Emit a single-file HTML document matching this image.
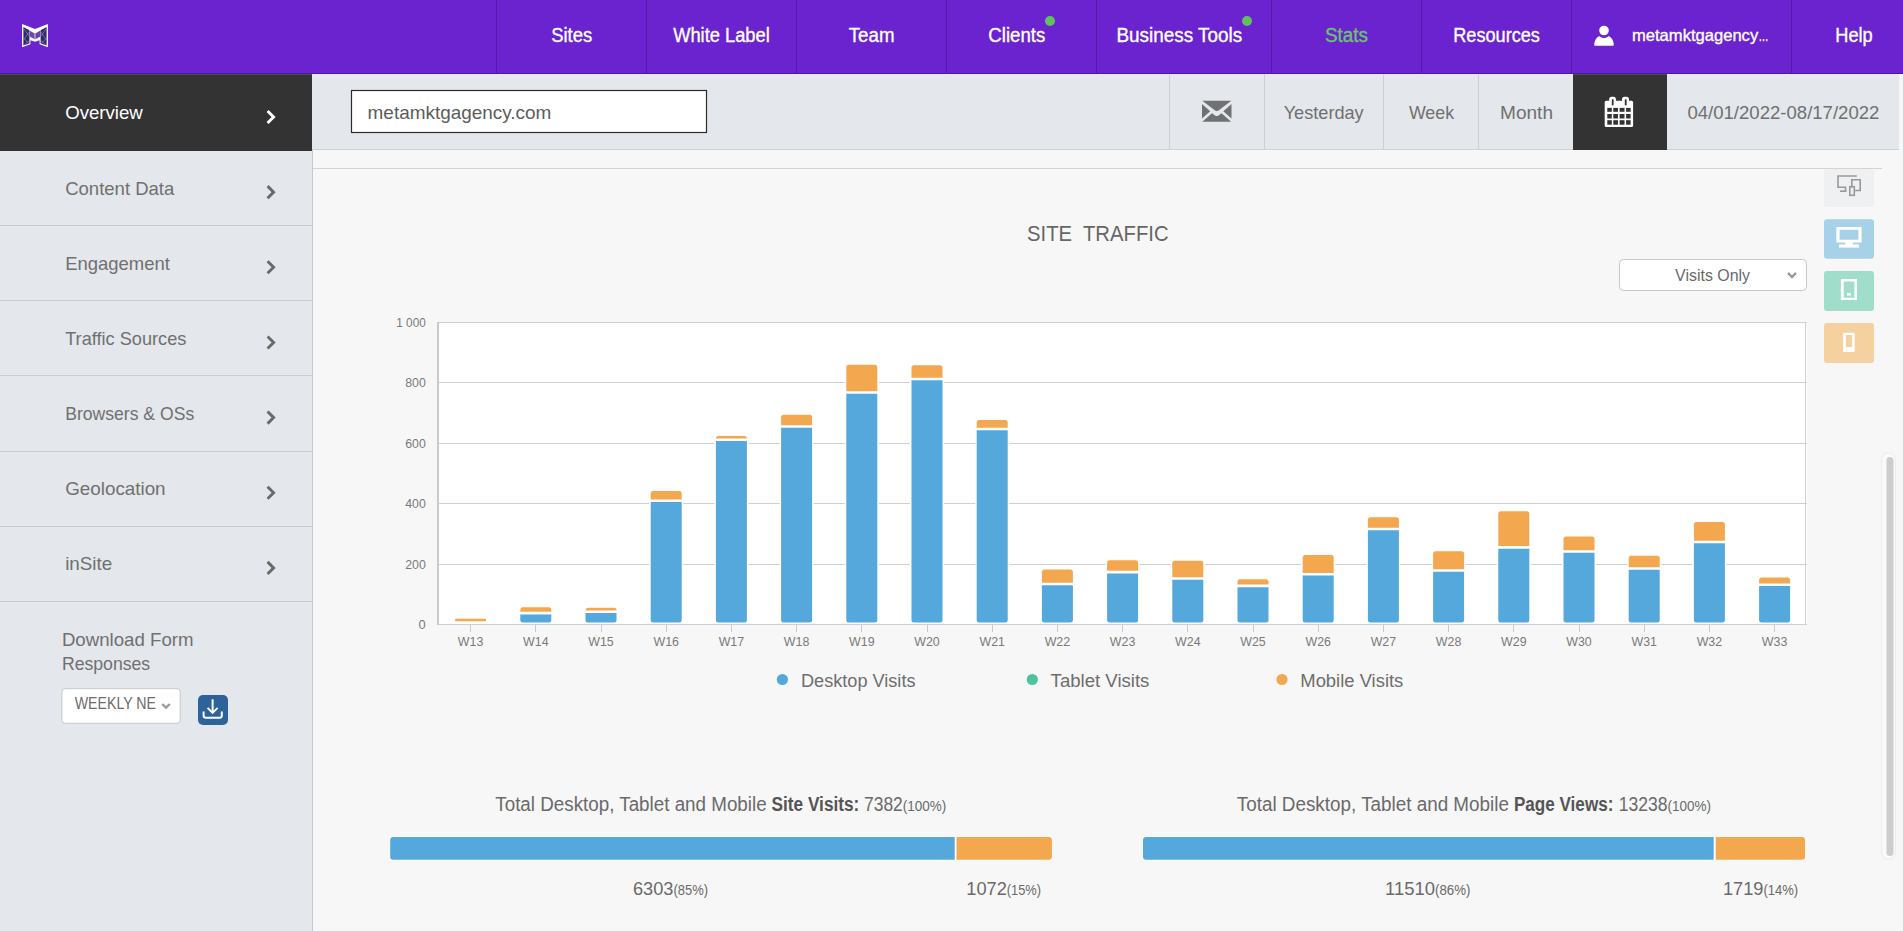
<!DOCTYPE html>
<html><head><meta charset="utf-8"><title>Stats</title>
<style>html,body{margin:0;padding:0;width:1903px;height:931px;overflow:hidden;background:#f7f7f7;font-family:"Liberation Sans", sans-serif;} svg{display:block}</style>
</head><body><svg width="1903" height="931" viewBox="0 0 1903 931" font-family='"Liberation Sans", sans-serif'><rect x="0" y="0" width="1903" height="931" fill="#f7f7f7"/><rect x="0" y="0" width="1903" height="73" fill="#6b22cf"/><rect x="0" y="73" width="1903" height="1" fill="#5314a8"/><rect x="496" y="0" width="1" height="73" fill="#5518ac"/><rect x="646" y="0" width="1" height="73" fill="#5518ac"/><rect x="796" y="0" width="1" height="73" fill="#5518ac"/><rect x="946" y="0" width="1" height="73" fill="#5518ac"/><rect x="1096" y="0" width="1" height="73" fill="#5518ac"/><rect x="1271" y="0" width="1" height="73" fill="#5518ac"/><rect x="1421" y="0" width="1" height="73" fill="#5518ac"/><rect x="1571" y="0" width="1" height="73" fill="#5518ac"/><rect x="1791" y="0" width="1" height="73" fill="#5518ac"/><g transform="translate(21,23)"><path d="M1.1,1.1 L14,5.9 L26.9,1.1 L26.9,24.3 L18.6,21.2 L18.6,17.3 L14.1,18.8 L9.4,17.3 L9.4,21.2 L1.1,24.3 Z" fill="#ffffff"/><path d="M2.4,4 L8.4,7.2 L8.4,20.4 L2.4,22.6 Z" fill="#2f2a6d"/><path d="M25.6,4 L19.6,7.2 L19.6,20.4 L25.6,22.6 Z" fill="#2f2a6d"/><path d="M8.6,7.6 L13.7,10.4 L13.7,16.2 L8.6,13.6 Z" fill="#7049ad"/><path d="M19.4,7.6 L14.3,10.4 L14.3,16.2 L19.4,13.6 Z" fill="#6844a5"/><rect x="13.6" y="10.4" width="0.8" height="5.8" fill="#b597d6"/><path d="M3,6 L8,13 M8,9 L3,16.5 M3,15.5 L8,21 M8,17.5 L3.5,22 M25,6 L20,13 M20,9 L25,16.5 M25,15.5 L20,21 M20,17.5 L24.5,22" stroke="#fff" stroke-width="0.55" stroke-opacity="0.55" fill="none"/></g><text x="571.7" y="42" font-size="19.5" fill="#fff" text-anchor="middle" textLength="41" lengthAdjust="spacingAndGlyphs" stroke="#fff" stroke-width="0.35">Sites</text><text x="721.5" y="42" font-size="19.5" fill="#fff" text-anchor="middle" textLength="96.6" lengthAdjust="spacingAndGlyphs" stroke="#fff" stroke-width="0.35">White Label</text><text x="871.6" y="42" font-size="19.5" fill="#fff" text-anchor="middle" textLength="45.7" lengthAdjust="spacingAndGlyphs" stroke="#fff" stroke-width="0.35">Team</text><text x="1016.8" y="42" font-size="19.5" fill="#fff" text-anchor="middle" textLength="57" lengthAdjust="spacingAndGlyphs" stroke="#fff" stroke-width="0.35">Clients</text><text x="1179.3" y="42" font-size="19.5" fill="#fff" text-anchor="middle" textLength="125.6" lengthAdjust="spacingAndGlyphs" stroke="#fff" stroke-width="0.35">Business Tools</text><text x="1346.5" y="42" font-size="19.5" fill="#6cc36d" text-anchor="middle" textLength="43" lengthAdjust="spacingAndGlyphs" stroke="#6cc36d" stroke-width="0.35">Stats</text><text x="1496.6" y="42" font-size="19.5" fill="#fff" text-anchor="middle" textLength="86.7" lengthAdjust="spacingAndGlyphs" stroke="#fff" stroke-width="0.35">Resources</text><text x="1632.0" y="41" font-size="16.5" fill="#fff" textLength="126.2" lengthAdjust="spacingAndGlyphs" stroke="#fff" stroke-width="0.35">metamktgagency</text><text x="1758.6" y="41" font-size="16.5" fill="#fff" textLength="10" lengthAdjust="spacingAndGlyphs" stroke="#fff" stroke-width="0.35">…</text><text x="1854" y="42" font-size="19.5" fill="#fff" text-anchor="middle" textLength="37.4" lengthAdjust="spacingAndGlyphs" stroke="#fff" stroke-width="0.35">Help</text><circle cx="1050" cy="21" r="5" fill="#5ec35f"/><circle cx="1247" cy="21" r="5" fill="#5ec35f"/><circle cx="1604" cy="30.5" r="4.8" fill="#fff"/><path d="M1594.2,44.5 C1594.5,40 1596.5,37.5 1599.3,36 C1601,37.4 1602.5,38 1604,38 C1605.5,38 1607,37.4 1608.7,36 C1611.5,37.5 1613.5,40 1613.8,44.5 C1613.8,45.5 1613.3,45.8 1612.5,45.8 L1595.5,45.8 C1594.7,45.8 1594.2,45.5 1594.2,44.5 Z" fill="#fff"/><rect x="0" y="74" width="312" height="857" fill="#e4e7eb"/><rect x="0" y="74" width="312" height="77" fill="#333333"/><rect x="0" y="74" width="312" height="1" fill="#4a4c48"/><rect x="312" y="150" width="1" height="781" fill="#c8c9cc"/><rect x="312" y="74" width="1587" height="75" fill="#e4e7eb"/><rect x="312" y="149" width="1587" height="1" fill="#cdd0d4"/><rect x="351.5" y="90.5" width="355" height="42" fill="#fff" stroke="#2b2b2b" stroke-width="1.2"/><text x="367.6" y="119" font-size="19" fill="#5c5c5c" textLength="183.7" lengthAdjust="spacingAndGlyphs">metamktgagency.com</text><rect x="1169" y="74" width="1" height="75" fill="#ccced2"/><rect x="1264" y="74" width="1" height="75" fill="#ccced2"/><rect x="1383" y="74" width="1" height="75" fill="#ccced2"/><rect x="1478" y="74" width="1" height="75" fill="#ccced2"/><g transform="translate(1202,100.8)" fill="#707173"><path d="M0.3,0 L29.3,0 L16.5,9.6 Q14.8,10.8 13.1,9.6 Z"/><path d="M0,3.2 L8.2,10.5 L0,17.8 Z"/><path d="M29.5,3.2 L21.3,10.5 L29.5,17.8 Z"/><path d="M0.3,21 L10,12.5 L13,14.6 Q14.75,15.8 16.5,14.6 L19.5,12.5 L29.2,21 Z"/></g><text x="1283.7" y="119.2" font-size="18.5" fill="#707070" textLength="80" lengthAdjust="spacingAndGlyphs">Yesterday</text><text x="1408.9" y="119.2" font-size="18.5" fill="#707070" textLength="45.2" lengthAdjust="spacingAndGlyphs">Week</text><text x="1500" y="119.2" font-size="18.5" fill="#707070" textLength="53" lengthAdjust="spacingAndGlyphs">Month</text><rect x="1573" y="74" width="94" height="76" fill="#333333"/><rect x="1573" y="74" width="94" height="1" fill="#4a4c48"/><g fill="#fff"><rect x="1604.7" y="100.8" width="28.4" height="26.3" rx="1.5"/><rect x="1609.2" y="96.7" width="6.7" height="9" rx="2.5"/><rect x="1622" y="96.7" width="7" height="9" rx="2.5"/></g><rect x="1611.8" y="99.3" width="1.8" height="6" fill="#333333"/><rect x="1624.8" y="99.3" width="1.8" height="6" fill="#333333"/><rect x="1607.3" y="107.9" width="4.5" height="3.9" fill="#333333"/><rect x="1613.3" y="107.9" width="4.7" height="3.9" fill="#333333"/><rect x="1619.6" y="107.9" width="4.9" height="3.9" fill="#333333"/><rect x="1626.1" y="107.9" width="4.5" height="3.9" fill="#333333"/><rect x="1607.3" y="114" width="4.5" height="4.5" fill="#333333"/><rect x="1613.3" y="114" width="4.7" height="4.5" fill="#333333"/><rect x="1619.6" y="114" width="4.9" height="4.5" fill="#333333"/><rect x="1626.1" y="114" width="4.5" height="4.5" fill="#333333"/><rect x="1607.3" y="120.2" width="4.5" height="4.5" fill="#333333"/><rect x="1613.3" y="120.2" width="4.7" height="4.5" fill="#333333"/><rect x="1619.6" y="120.2" width="4.9" height="4.5" fill="#333333"/><rect x="1626.1" y="120.2" width="4.5" height="4.5" fill="#333333"/><text x="1687.4" y="118.6" font-size="18.5" fill="#707070" textLength="192" lengthAdjust="spacingAndGlyphs">04/01/2022-08/17/2022</text><text x="65.2" y="119.4" font-size="18.5" fill="#fff" textLength="77.6" lengthAdjust="spacingAndGlyphs">Overview</text><path d="M268.6,112.00 L273.6,117.00 L268.6,122.00" fill="none" stroke="#fff" stroke-width="2.9" stroke-linecap="square" stroke-linejoin="miter"/><text x="65.2" y="194.55" font-size="18.5" fill="#707070" textLength="109.1" lengthAdjust="spacingAndGlyphs">Content Data</text><path d="M268.6,187.15 L273.6,192.15 L268.6,197.15" fill="none" stroke="#6a6a6a" stroke-width="2.9" stroke-linecap="square" stroke-linejoin="miter"/><text x="65.2" y="269.7" font-size="18.5" fill="#707070" textLength="104.7" lengthAdjust="spacingAndGlyphs">Engagement</text><path d="M268.6,262.30 L273.6,267.30 L268.6,272.30" fill="none" stroke="#6a6a6a" stroke-width="2.9" stroke-linecap="square" stroke-linejoin="miter"/><text x="65.2" y="344.85" font-size="18.5" fill="#707070" textLength="121.2" lengthAdjust="spacingAndGlyphs">Traffic Sources</text><path d="M268.6,337.45 L273.6,342.45 L268.6,347.45" fill="none" stroke="#6a6a6a" stroke-width="2.9" stroke-linecap="square" stroke-linejoin="miter"/><text x="65.2" y="420.0" font-size="18.5" fill="#707070" textLength="129" lengthAdjust="spacingAndGlyphs">Browsers &amp; OSs</text><path d="M268.6,412.60 L273.6,417.60 L268.6,422.60" fill="none" stroke="#6a6a6a" stroke-width="2.9" stroke-linecap="square" stroke-linejoin="miter"/><text x="65.2" y="495.15" font-size="18.5" fill="#707070" textLength="100.4" lengthAdjust="spacingAndGlyphs">Geolocation</text><path d="M268.6,487.75 L273.6,492.75 L268.6,497.75" fill="none" stroke="#6a6a6a" stroke-width="2.9" stroke-linecap="square" stroke-linejoin="miter"/><text x="65.2" y="570.3" font-size="18.5" fill="#707070" textLength="47" lengthAdjust="spacingAndGlyphs">inSite</text><path d="M268.6,562.90 L273.6,567.90 L268.6,572.90" fill="none" stroke="#6a6a6a" stroke-width="2.9" stroke-linecap="square" stroke-linejoin="miter"/><rect x="0" y="225" width="312" height="1" fill="#c9cbcf"/><rect x="0" y="300" width="312" height="1" fill="#c9cbcf"/><rect x="0" y="375" width="312" height="1" fill="#c9cbcf"/><rect x="0" y="451" width="312" height="1" fill="#c9cbcf"/><rect x="0" y="526" width="312" height="1" fill="#c9cbcf"/><rect x="0" y="601" width="312" height="1" fill="#c9cbcf"/><text x="61.9" y="646.3" font-size="18.5" fill="#707070" textLength="131.6" lengthAdjust="spacingAndGlyphs">Download Form</text><text x="61.9" y="669.6" font-size="18.5" fill="#707070" textLength="88.3" lengthAdjust="spacingAndGlyphs">Responses</text><rect x="61.9" y="688.7" width="118.3" height="34.6" rx="3" fill="#fff" stroke="#c8c8c8" stroke-width="1"/><text x="74.7" y="708.9" font-size="17.3" fill="#6c6c6c" textLength="81.3" lengthAdjust="spacingAndGlyphs">WEEKLY NE</text><path d="M162.2,704 L166,707.6 L169.8,704" fill="none" stroke="#9a9a9a" stroke-width="2.4"/><rect x="198" y="695" width="30" height="30" fill="#2e6399" rx="5"/><g fill="none" stroke="#fff" stroke-width="2"><path d="M212.6,699.3 L212.6,712"/><path d="M207.6,707.9 L212.6,712.9 L217.6,707.9"/><path d="M203.6,711.6 L203.6,715.6 Q203.6,717.8 205.8,717.8 L219.6,717.8 Q221.8,717.8 221.8,715.6 L221.8,711.6"/></g><rect x="313" y="168" width="1569" height="1" fill="#d3d3d3"/><text x="1097.8" y="240.7" font-size="22.5" fill="#666666" text-anchor="middle" textLength="141.5" lengthAdjust="spacingAndGlyphs" xml:space="preserve">SITE  TRAFFIC</text><rect x="1619.5" y="259.5" width="187" height="31" rx="4" fill="#fff" stroke="#c8c8c8" stroke-width="1"/><text x="1675.1" y="281" font-size="16.5" fill="#6a6a6a" textLength="75" lengthAdjust="spacingAndGlyphs">Visits Only</text><path d="M1788,272.8 L1792,277 L1796,272.8" fill="none" stroke="#9a9a9a" stroke-width="2.4"/><rect x="1824" y="169" width="50" height="38" fill="#eff0f2" rx="3"/><g fill="none" stroke="#999" stroke-width="1.6"><path d="M1856.8,176 L1838,176 L1838,187.2 L1845.5,187.2 L1845.5,191"/><path d="M1840,191.2 L1846.5,191.2"/><path d="M1851.8,187.5 L1851.8,179.8 L1860.2,179.8 L1860.2,190.5 L1855.2,190.5"/><rect x="1849.8" y="186.7" width="4.5" height="8.6"/></g><rect x="1824" y="219.2" width="50" height="39.5" fill="#a7d0e9" rx="3"/><g fill="#fff"><path fill-rule="evenodd" d="M1836.3,227 L1861.6,227 L1861.6,242.5 L1836.3,242.5 Z M1839.6,229.7 L1839.6,239.8 L1858.4,239.8 L1858.4,229.7 Z"/><rect x="1845.2" y="242" width="7.5" height="3"/><rect x="1839.1" y="244.4" width="19.8" height="3.2"/></g><rect x="1824" y="271" width="50" height="40" fill="#a1ddcb" rx="3"/><g fill="#fff"><path fill-rule="evenodd" d="M1840.9,279.1 L1857,279.1 L1857,300 L1840.9,300 Z M1843.7,281.4 L1843.7,297.7 L1854.4,297.7 L1854.4,281.4 Z"/><rect x="1847" y="293" width="3.7" height="2.7"/></g><rect x="1824" y="323" width="50" height="40" fill="#f5d1a0" rx="3"/><g fill="#fff"><path fill-rule="evenodd" d="M1843.1,332.7 L1854.7,332.7 L1854.7,352.1 L1843.1,352.1 Z M1845.9,334.9 L1845.9,347.1 L1852.1,347.1 L1852.1,334.9 Z"/></g><rect x="437" y="322" width="1370" height="303" fill="#ffffff"/><rect x="437" y="322" width="1370" height="1" fill="#cfd0d4"/><rect x="437" y="382" width="1370" height="1" fill="#cfd0d4"/><rect x="437" y="443" width="1370" height="1" fill="#cfd0d4"/><rect x="437" y="503" width="1370" height="1" fill="#cfd0d4"/><rect x="437" y="564" width="1370" height="1" fill="#cfd0d4"/><rect x="437" y="624" width="1370" height="1" fill="#cfd0d4"/><rect x="437" y="322" width="2" height="303" fill="#c8cacf"/><rect x="1805" y="322" width="1" height="303" fill="#cfd0d4"/><text x="425.8" y="327.2" font-size="13.2" fill="#7a7a7a" text-anchor="end" textLength="29.5" lengthAdjust="spacingAndGlyphs">1 000</text><text x="425.8" y="387.2" font-size="13.2" fill="#7a7a7a" text-anchor="end" textLength="20.6" lengthAdjust="spacingAndGlyphs">800</text><text x="425.8" y="448.2" font-size="13.2" fill="#7a7a7a" text-anchor="end" textLength="20.6" lengthAdjust="spacingAndGlyphs">600</text><text x="425.8" y="508.2" font-size="13.2" fill="#7a7a7a" text-anchor="end" textLength="20.6" lengthAdjust="spacingAndGlyphs">400</text><text x="425.8" y="569.2" font-size="13.2" fill="#7a7a7a" text-anchor="end" textLength="20.6" lengthAdjust="spacingAndGlyphs">200</text><text x="425.8" y="629.2" font-size="13.2" fill="#7a7a7a" text-anchor="end" textLength="7.2" lengthAdjust="spacingAndGlyphs">0</text><rect x="470" y="625" width="1" height="7" fill="#c8cacf"/><text x="470.6" y="646.4" font-size="13.5" fill="#7a7a7a" text-anchor="middle" textLength="25.5" lengthAdjust="spacingAndGlyphs">W13</text><rect x="453.60" y="617.25" width="34" height="6.65" rx="3" fill="#fff"/><path d="M455.10,621.2 L455.10,619.975 Q455.10,618.75 456.33,618.75 L484.88,618.75 Q486.10,618.75 486.10,619.975 L486.10,621.2 Z" fill="#f3a84f"/><rect x="535" y="625" width="1" height="7" fill="#c8cacf"/><text x="535.8" y="646.4" font-size="13.5" fill="#7a7a7a" text-anchor="middle" textLength="25.5" lengthAdjust="spacingAndGlyphs">W14</text><rect x="518.80" y="605.85" width="34" height="18.05" rx="3" fill="#fff"/><path d="M520.30,611.85 L520.30,609.85 Q520.30,607.35 522.80,607.35 L548.80,607.35 Q551.30,607.35 551.30,609.85 L551.30,611.85 Z" fill="#f3a84f"/><path d="M520.30,614.45 L520.30,619.90 Q520.30,622.4 522.80,622.4 L548.80,622.4 Q551.30,622.4 551.30,619.90 L551.30,614.45 Z" fill="#55a8dc"/><rect x="601" y="625" width="1" height="7" fill="#c8cacf"/><text x="601.0" y="646.4" font-size="13.5" fill="#7a7a7a" text-anchor="middle" textLength="25.5" lengthAdjust="spacingAndGlyphs">W15</text><rect x="584.00" y="606.25" width="34" height="17.65" rx="3" fill="#fff"/><path d="M585.50,610.45 L585.50,610.25 Q585.50,607.75 588.00,607.75 L614.00,607.75 Q616.50,607.75 616.50,610.25 L616.50,610.45 Z" fill="#f3a84f"/><path d="M585.50,613.05 L585.50,619.90 Q585.50,622.4 588.00,622.4 L614.00,622.4 Q616.50,622.4 616.50,619.90 L616.50,613.05 Z" fill="#55a8dc"/><rect x="666" y="625" width="1" height="7" fill="#c8cacf"/><text x="666.2" y="646.4" font-size="13.5" fill="#7a7a7a" text-anchor="middle" textLength="25.5" lengthAdjust="spacingAndGlyphs">W16</text><rect x="649.20" y="489.45" width="34" height="134.45" rx="3" fill="#fff"/><path d="M650.70,499.45 L650.70,493.45 Q650.70,490.95 653.20,490.95 L679.20,490.95 Q681.70,490.95 681.70,493.45 L681.70,499.45 Z" fill="#f3a84f"/><path d="M650.70,502.05 L650.70,619.90 Q650.70,622.4 653.20,622.4 L679.20,622.4 Q681.70,622.4 681.70,619.90 L681.70,502.05 Z" fill="#55a8dc"/><rect x="731" y="625" width="1" height="7" fill="#c8cacf"/><text x="731.4" y="646.4" font-size="13.5" fill="#7a7a7a" text-anchor="middle" textLength="25.5" lengthAdjust="spacingAndGlyphs">W17</text><rect x="714.40" y="434.45" width="34" height="189.45" rx="3" fill="#fff"/><path d="M715.90,438.45 L715.90,438.45 Q715.90,435.95 718.40,435.95 L744.40,435.95 Q746.90,435.95 746.90,438.45 L746.90,438.45 Z" fill="#f3a84f"/><path d="M715.90,441.05 L715.90,619.90 Q715.90,622.4 718.40,622.4 L744.40,622.4 Q746.90,622.4 746.90,619.90 L746.90,441.05 Z" fill="#55a8dc"/><rect x="796" y="625" width="1" height="7" fill="#c8cacf"/><text x="796.6" y="646.4" font-size="13.5" fill="#7a7a7a" text-anchor="middle" textLength="25.5" lengthAdjust="spacingAndGlyphs">W18</text><rect x="779.60" y="413.35" width="34" height="210.55" rx="3" fill="#fff"/><path d="M781.10,425.25 L781.10,417.35 Q781.10,414.85 783.60,414.85 L809.60,414.85 Q812.10,414.85 812.10,417.35 L812.10,425.25 Z" fill="#f3a84f"/><path d="M781.10,427.85 L781.10,619.90 Q781.10,622.4 783.60,622.4 L809.60,622.4 Q812.10,622.4 812.10,619.90 L812.10,427.85 Z" fill="#55a8dc"/><rect x="861" y="625" width="1" height="7" fill="#c8cacf"/><text x="861.8" y="646.4" font-size="13.5" fill="#7a7a7a" text-anchor="middle" textLength="25.5" lengthAdjust="spacingAndGlyphs">W19</text><rect x="844.80" y="363.15" width="34" height="260.75" rx="3" fill="#fff"/><path d="M846.30,391.25 L846.30,367.15 Q846.30,364.65 848.80,364.65 L874.80,364.65 Q877.30,364.65 877.30,367.15 L877.30,391.25 Z" fill="#f3a84f"/><path d="M846.30,393.85 L846.30,619.90 Q846.30,622.4 848.80,622.4 L874.80,622.4 Q877.30,622.4 877.30,619.90 L877.30,393.85 Z" fill="#55a8dc"/><rect x="927" y="625" width="1" height="7" fill="#c8cacf"/><text x="927.0" y="646.4" font-size="13.5" fill="#7a7a7a" text-anchor="middle" textLength="25.5" lengthAdjust="spacingAndGlyphs">W20</text><rect x="910.00" y="363.75" width="34" height="260.15" rx="3" fill="#fff"/><path d="M911.50,377.65 L911.50,367.75 Q911.50,365.25 914.00,365.25 L940.00,365.25 Q942.50,365.25 942.50,367.75 L942.50,377.65 Z" fill="#f3a84f"/><path d="M911.50,380.25 L911.50,619.90 Q911.50,622.4 914.00,622.4 L940.00,622.4 Q942.50,622.4 942.50,619.90 L942.50,380.25 Z" fill="#55a8dc"/><rect x="992" y="625" width="1" height="7" fill="#c8cacf"/><text x="992.2" y="646.4" font-size="13.5" fill="#7a7a7a" text-anchor="middle" textLength="25.5" lengthAdjust="spacingAndGlyphs">W21</text><rect x="975.20" y="418.55" width="34" height="205.35" rx="3" fill="#fff"/><path d="M976.70,427.65 L976.70,422.55 Q976.70,420.05 979.20,420.05 L1005.20,420.05 Q1007.70,420.05 1007.70,422.55 L1007.70,427.65 Z" fill="#f3a84f"/><path d="M976.70,430.25 L976.70,619.90 Q976.70,622.4 979.20,622.4 L1005.20,622.4 Q1007.70,622.4 1007.70,619.90 L1007.70,430.25 Z" fill="#55a8dc"/><rect x="1057" y="625" width="1" height="7" fill="#c8cacf"/><text x="1057.4" y="646.4" font-size="13.5" fill="#7a7a7a" text-anchor="middle" textLength="25.5" lengthAdjust="spacingAndGlyphs">W22</text><rect x="1040.40" y="567.95" width="34" height="55.95" rx="3" fill="#fff"/><path d="M1041.90,582.65 L1041.90,571.95 Q1041.90,569.45 1044.40,569.45 L1070.40,569.45 Q1072.90,569.45 1072.90,571.95 L1072.90,582.65 Z" fill="#f3a84f"/><path d="M1041.90,585.25 L1041.90,619.90 Q1041.90,622.4 1044.40,622.4 L1070.40,622.4 Q1072.90,622.4 1072.90,619.90 L1072.90,585.25 Z" fill="#55a8dc"/><rect x="1122" y="625" width="1" height="7" fill="#c8cacf"/><text x="1122.6" y="646.4" font-size="13.5" fill="#7a7a7a" text-anchor="middle" textLength="25.5" lengthAdjust="spacingAndGlyphs">W23</text><rect x="1105.60" y="558.75" width="34" height="65.15" rx="3" fill="#fff"/><path d="M1107.10,570.85 L1107.10,562.75 Q1107.10,560.25 1109.60,560.25 L1135.60,560.25 Q1138.10,560.25 1138.10,562.75 L1138.10,570.85 Z" fill="#f3a84f"/><path d="M1107.10,573.45 L1107.10,619.90 Q1107.10,622.4 1109.60,622.4 L1135.60,622.4 Q1138.10,622.4 1138.10,619.90 L1138.10,573.45 Z" fill="#55a8dc"/><rect x="1187" y="625" width="1" height="7" fill="#c8cacf"/><text x="1187.8" y="646.4" font-size="13.5" fill="#7a7a7a" text-anchor="middle" textLength="25.5" lengthAdjust="spacingAndGlyphs">W24</text><rect x="1170.80" y="559.15" width="34" height="64.75" rx="3" fill="#fff"/><path d="M1172.30,577.15 L1172.30,563.15 Q1172.30,560.65 1174.80,560.65 L1200.80,560.65 Q1203.30,560.65 1203.30,563.15 L1203.30,577.15 Z" fill="#f3a84f"/><path d="M1172.30,579.75 L1172.30,619.90 Q1172.30,622.4 1174.80,622.4 L1200.80,622.4 Q1203.30,622.4 1203.30,619.90 L1203.30,579.75 Z" fill="#55a8dc"/><rect x="1253" y="625" width="1" height="7" fill="#c8cacf"/><text x="1253.0" y="646.4" font-size="13.5" fill="#7a7a7a" text-anchor="middle" textLength="25.5" lengthAdjust="spacingAndGlyphs">W25</text><rect x="1236.00" y="577.85" width="34" height="46.05" rx="3" fill="#fff"/><path d="M1237.50,584.55 L1237.50,581.85 Q1237.50,579.35 1240.00,579.35 L1266.00,579.35 Q1268.50,579.35 1268.50,581.85 L1268.50,584.55 Z" fill="#f3a84f"/><path d="M1237.50,587.15 L1237.50,619.90 Q1237.50,622.4 1240.00,622.4 L1266.00,622.4 Q1268.50,622.4 1268.50,619.90 L1268.50,587.15 Z" fill="#55a8dc"/><rect x="1318" y="625" width="1" height="7" fill="#c8cacf"/><text x="1318.2" y="646.4" font-size="13.5" fill="#7a7a7a" text-anchor="middle" textLength="25.5" lengthAdjust="spacingAndGlyphs">W26</text><rect x="1301.20" y="553.45" width="34" height="70.45" rx="3" fill="#fff"/><path d="M1302.70,572.95 L1302.70,557.45 Q1302.70,554.95 1305.20,554.95 L1331.20,554.95 Q1333.70,554.95 1333.70,557.45 L1333.70,572.95 Z" fill="#f3a84f"/><path d="M1302.70,575.55 L1302.70,619.90 Q1302.70,622.4 1305.20,622.4 L1331.20,622.4 Q1333.70,622.4 1333.70,619.90 L1333.70,575.55 Z" fill="#55a8dc"/><rect x="1383" y="625" width="1" height="7" fill="#c8cacf"/><text x="1383.4" y="646.4" font-size="13.5" fill="#7a7a7a" text-anchor="middle" textLength="25.5" lengthAdjust="spacingAndGlyphs">W27</text><rect x="1366.40" y="515.65" width="34" height="108.25" rx="3" fill="#fff"/><path d="M1367.90,527.75 L1367.90,519.65 Q1367.90,517.15 1370.40,517.15 L1396.40,517.15 Q1398.90,517.15 1398.90,519.65 L1398.90,527.75 Z" fill="#f3a84f"/><path d="M1367.90,530.35 L1367.90,619.90 Q1367.90,622.4 1370.40,622.4 L1396.40,622.4 Q1398.90,622.4 1398.90,619.90 L1398.90,530.35 Z" fill="#55a8dc"/><rect x="1448" y="625" width="1" height="7" fill="#c8cacf"/><text x="1448.6" y="646.4" font-size="13.5" fill="#7a7a7a" text-anchor="middle" textLength="25.5" lengthAdjust="spacingAndGlyphs">W28</text><rect x="1431.60" y="549.75" width="34" height="74.15" rx="3" fill="#fff"/><path d="M1433.10,569.25 L1433.10,553.75 Q1433.10,551.25 1435.60,551.25 L1461.60,551.25 Q1464.10,551.25 1464.10,553.75 L1464.10,569.25 Z" fill="#f3a84f"/><path d="M1433.10,571.85 L1433.10,619.90 Q1433.10,622.4 1435.60,622.4 L1461.60,622.4 Q1464.10,622.4 1464.10,619.90 L1464.10,571.85 Z" fill="#55a8dc"/><rect x="1513" y="625" width="1" height="7" fill="#c8cacf"/><text x="1513.8" y="646.4" font-size="13.5" fill="#7a7a7a" text-anchor="middle" textLength="25.5" lengthAdjust="spacingAndGlyphs">W29</text><rect x="1496.80" y="509.75" width="34" height="114.15" rx="3" fill="#fff"/><path d="M1498.30,546.05 L1498.30,513.75 Q1498.30,511.25 1500.80,511.25 L1526.80,511.25 Q1529.30,511.25 1529.30,513.75 L1529.30,546.05 Z" fill="#f3a84f"/><path d="M1498.30,548.65 L1498.30,619.90 Q1498.30,622.4 1500.80,622.4 L1526.80,622.4 Q1529.30,622.4 1529.30,619.90 L1529.30,548.65 Z" fill="#55a8dc"/><rect x="1579" y="625" width="1" height="7" fill="#c8cacf"/><text x="1579.0" y="646.4" font-size="13.5" fill="#7a7a7a" text-anchor="middle" textLength="25.5" lengthAdjust="spacingAndGlyphs">W30</text><rect x="1562.00" y="534.95" width="34" height="88.95" rx="3" fill="#fff"/><path d="M1563.50,550.25 L1563.50,538.95 Q1563.50,536.45 1566.00,536.45 L1592.00,536.45 Q1594.50,536.45 1594.50,538.95 L1594.50,550.25 Z" fill="#f3a84f"/><path d="M1563.50,552.85 L1563.50,619.90 Q1563.50,622.4 1566.00,622.4 L1592.00,622.4 Q1594.50,622.4 1594.50,619.90 L1594.50,552.85 Z" fill="#55a8dc"/><rect x="1644" y="625" width="1" height="7" fill="#c8cacf"/><text x="1644.2" y="646.4" font-size="13.5" fill="#7a7a7a" text-anchor="middle" textLength="25.5" lengthAdjust="spacingAndGlyphs">W31</text><rect x="1627.20" y="554.15" width="34" height="69.75" rx="3" fill="#fff"/><path d="M1628.70,567.15 L1628.70,558.15 Q1628.70,555.65 1631.20,555.65 L1657.20,555.65 Q1659.70,555.65 1659.70,558.15 L1659.70,567.15 Z" fill="#f3a84f"/><path d="M1628.70,569.75 L1628.70,619.90 Q1628.70,622.4 1631.20,622.4 L1657.20,622.4 Q1659.70,622.4 1659.70,619.90 L1659.70,569.75 Z" fill="#55a8dc"/><rect x="1709" y="625" width="1" height="7" fill="#c8cacf"/><text x="1709.4" y="646.4" font-size="13.5" fill="#7a7a7a" text-anchor="middle" textLength="25.5" lengthAdjust="spacingAndGlyphs">W32</text><rect x="1692.40" y="520.45" width="34" height="103.45" rx="3" fill="#fff"/><path d="M1693.90,540.65 L1693.90,524.45 Q1693.90,521.95 1696.40,521.95 L1722.40,521.95 Q1724.90,521.95 1724.90,524.45 L1724.90,540.65 Z" fill="#f3a84f"/><path d="M1693.90,543.25 L1693.90,619.90 Q1693.90,622.4 1696.40,622.4 L1722.40,622.4 Q1724.90,622.4 1724.90,619.90 L1724.90,543.25 Z" fill="#55a8dc"/><rect x="1774" y="625" width="1" height="7" fill="#c8cacf"/><text x="1774.6" y="646.4" font-size="13.5" fill="#7a7a7a" text-anchor="middle" textLength="25.5" lengthAdjust="spacingAndGlyphs">W33</text><rect x="1757.60" y="575.95" width="34" height="47.95" rx="3" fill="#fff"/><path d="M1759.10,583.45 L1759.10,579.95 Q1759.10,577.45 1761.60,577.45 L1787.60,577.45 Q1790.10,577.45 1790.10,579.95 L1790.10,583.45 Z" fill="#f3a84f"/><path d="M1759.10,586.05 L1759.10,619.90 Q1759.10,622.4 1761.60,622.4 L1787.60,622.4 Q1790.10,622.4 1790.10,619.90 L1790.10,586.05 Z" fill="#55a8dc"/><circle cx="782.4" cy="679.5" r="5.6" fill="#55a8dc"/><text x="801.0" y="686.9" font-size="18.3" fill="#6e6e6e" textLength="114.5" lengthAdjust="spacingAndGlyphs">Desktop Visits</text><circle cx="1032.3" cy="679.5" r="5.6" fill="#4fc3a0"/><text x="1050.6" y="686.9" font-size="18.3" fill="#6e6e6e" textLength="98.8" lengthAdjust="spacingAndGlyphs">Tablet Visits</text><circle cx="1282" cy="679.5" r="5.6" fill="#f3a84f"/><text x="1300.3" y="686.9" font-size="18.3" fill="#6e6e6e" textLength="103" lengthAdjust="spacingAndGlyphs">Mobile Visits</text><text x="495.3" y="811.05" font-size="19.5" fill="#6a6a6a" textLength="271.3" lengthAdjust="spacingAndGlyphs">Total Desktop, Tablet and Mobile</text><text x="771.6" y="811.05" font-size="19.5" fill="#555" font-weight="700" textLength="87.7" lengthAdjust="spacingAndGlyphs">Site Visits:</text><text x="864" y="811.05" font-size="19.5" fill="#6a6a6a" textLength="38.8" lengthAdjust="spacingAndGlyphs">7382</text><text x="902.8" y="811.05" font-size="15.5" fill="#6a6a6a" textLength="43.5" lengthAdjust="spacingAndGlyphs">(100%)</text><text x="1236.8" y="811.05" font-size="19.5" fill="#6a6a6a" textLength="272.1" lengthAdjust="spacingAndGlyphs">Total Desktop, Tablet and Mobile</text><text x="1513.9" y="811.05" font-size="19.5" fill="#555" font-weight="700" textLength="99.5" lengthAdjust="spacingAndGlyphs">Page Views:</text><text x="1618.7" y="811.05" font-size="19.5" fill="#6a6a6a" textLength="48.7" lengthAdjust="spacingAndGlyphs">13238</text><text x="1667.4" y="811.05" font-size="15.5" fill="#6a6a6a" textLength="43.5" lengthAdjust="spacingAndGlyphs">(100%)</text><rect x="389.7" y="836.4" width="662.7" height="24" rx="3" fill="#fff"/><path d="M954.7,837 L393.2,837 Q390.2,837 390.2,840 L390.2,856.8 Q390.2,859.8 393.2,859.8 L954.7,859.8 Z" fill="#55a8dc"/><path d="M956.5,837 L1048.9,837 Q1051.9,837 1051.9,840 L1051.9,856.8 Q1051.9,859.8 1048.9,859.8 L956.5,859.8 Z" fill="#f3a84f"/><rect x="1142.5" y="836.4" width="663.0999999999999" height="24" rx="3" fill="#fff"/><path d="M1713.7,837 L1146,837 Q1143,837 1143,840 L1143,856.8 Q1143,859.8 1146,859.8 L1713.7,859.8 Z" fill="#55a8dc"/><path d="M1715.7,837 L1802.1,837 Q1805.1,837 1805.1,840 L1805.1,856.8 Q1805.1,859.8 1802.1,859.8 L1715.7,859.8 Z" fill="#f3a84f"/><text x="633" y="895.3" font-size="19" fill="#6a6a6a" textLength="40.5" lengthAdjust="spacingAndGlyphs">6303</text><text x="673.5" y="895.3" font-size="15.5" fill="#6a6a6a" textLength="34.6" lengthAdjust="spacingAndGlyphs">(85%)</text><text x="966.3" y="895.3" font-size="19" fill="#6a6a6a" textLength="40.5" lengthAdjust="spacingAndGlyphs">1072</text><text x="1006.8" y="895.3" font-size="15.5" fill="#6a6a6a" textLength="34.2" lengthAdjust="spacingAndGlyphs">(15%)</text><text x="1385.1" y="895.3" font-size="19" fill="#6a6a6a" textLength="50" lengthAdjust="spacingAndGlyphs">11510</text><text x="1435.1" y="895.3" font-size="15.5" fill="#6a6a6a" textLength="35.3" lengthAdjust="spacingAndGlyphs">(86%)</text><text x="1723" y="895.3" font-size="19" fill="#6a6a6a" textLength="40.5" lengthAdjust="spacingAndGlyphs">1719</text><text x="1763.5" y="895.3" font-size="15.5" fill="#6a6a6a" textLength="34.7" lengthAdjust="spacingAndGlyphs">(14%)</text><rect x="1881.5" y="452.5" width="14" height="407" rx="7" fill="#f9f9f9" stroke="#ececec" stroke-width="1"/><rect x="1886.5" y="457" width="7" height="399" rx="3.5" fill="#cdcdcd"/></svg></body></html>
